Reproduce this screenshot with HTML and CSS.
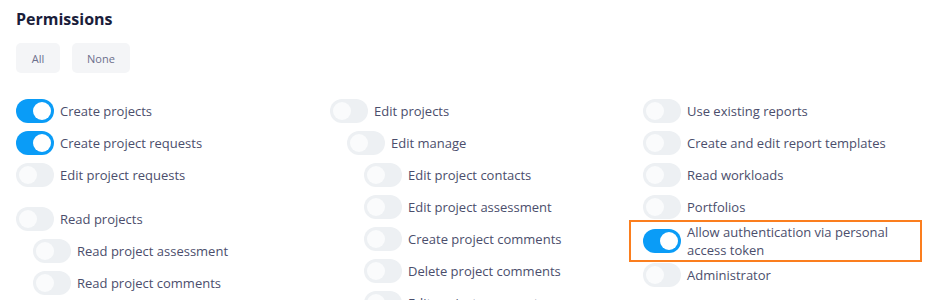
FILE: index.html
```html
<!DOCTYPE html>
<html>
<head>
<meta charset="utf-8">
<link rel="stylesheet" href="styles.css">
</head>
<body>
<div class="page">
  <h2 class="title">Permissions</h2>
  <div class="actions">
    <button class="btn btn-all">All</button>
    <button class="btn btn-none">None</button>
  </div>
  <div class="grid">
    <div class="col">
      <div class="group">
        <div class="row"><span class="toggle on"></span><span class="label">Create projects</span></div>
        <div class="row"><span class="toggle on"></span><span class="label">Create project requests</span></div>
        <div class="row"><span class="toggle"></span><span class="label">Edit project requests</span></div>
      </div>
      <div class="group">
        <div class="row"><span class="toggle"></span><span class="label">Read projects</span></div>
        <div class="row l1"><span class="toggle"></span><span class="label">Read project assessment</span></div>
        <div class="row l1"><span class="toggle"></span><span class="label">Read project comments</span></div>
      </div>
    </div>
    <div class="col">
      <div class="group">
        <div class="row"><span class="toggle"></span><span class="label">Edit projects</span></div>
        <div class="row l1"><span class="toggle"></span><span class="label">Edit manage</span></div>
        <div class="row l2"><span class="toggle"></span><span class="label">Edit project contacts</span></div>
        <div class="row l2"><span class="toggle"></span><span class="label">Edit project assessment</span></div>
        <div class="row l2"><span class="toggle"></span><span class="label">Create project comments</span></div>
        <div class="row l2"><span class="toggle"></span><span class="label">Delete project comments</span></div>
        <div class="row l2"><span class="toggle"></span><span class="label">Edit project comments</span></div>
      </div>
    </div>
    <div class="col">
      <div class="group">
        <div class="row"><span class="toggle"></span><span class="label">Use existing reports</span></div>
        <div class="row"><span class="toggle"></span><span class="label">Create and edit report templates</span></div>
        <div class="row"><span class="toggle"></span><span class="label">Read workloads</span></div>
        <div class="row"><span class="toggle"></span><span class="label">Portfolios</span></div>
        <div class="row highlight"><span class="toggle on"></span><span class="label">Allow authentication via personal<br>access token</span></div>
        <div class="row"><span class="toggle"></span><span class="label">Administrator</span></div>
      </div>
    </div>
  </div>
</div>
</body>
</html>
```
FILE: styles.css
```css
* { box-sizing: border-box; }
html, body { margin: 0; padding: 0; background: #ffffff; }
body {
  font-family: "Open Sans", "Noto Sans", sans-serif;
  overflow: hidden;
  height: 300px;
}
.page {
  padding: 9px 16px 0 16px;
}
.title {
  margin: 0;
  font-size: 16px;
  line-height: 20px;
  font-weight: 700;
  color: #1a1d3a;
}
.actions {
  display: flex;
  gap: 12px;
  margin-top: 14px;
}
.btn {
  height: 30px;
  border: none;
  border-radius: 5px;
  background: #f4f5f7;
  color: #6c6f8c;
  font-family: inherit;
  font-size: 11px;
  padding: 0;
}
.btn-all { width: 44px; }
.btn-none { width: 58px; }
.grid {
  display: grid;
  grid-template-columns: 314px 313px 1fr;
  margin-top: 22px;
}
.group + .group { margin-top: 12px; }
.row {
  display: flex;
  align-items: center;
  gap: 6px;
  min-height: 32px;
  padding: 1px 0;
}
.row.l1 { margin-left: 17px; }
.row.l2 { margin-left: 34px; }
.label {
  font-size: 13px;
  line-height: 18px;
  color: #4b4e6c;
  white-space: nowrap;
}
.toggle {
  position: relative;
  flex: none;
  width: 38px;
  height: 24px;
  border-radius: 12px;
  background: #edf0f3;
}
.toggle::after {
  content: "";
  position: absolute;
  top: 3px;
  left: 3px;
  width: 18px;
  height: 18px;
  border-radius: 50%;
  background: #fafbfc;
}
.toggle.on { background: #0a9cf7; }
.toggle.on::after { left: 17px; background: #ffffff; }
.highlight {
  border: 2px solid #fb7e1e;
  margin: -3px 0 -3px -14px;
  padding: 1px 0 1px 12px;
  width: 293px;
}
```
